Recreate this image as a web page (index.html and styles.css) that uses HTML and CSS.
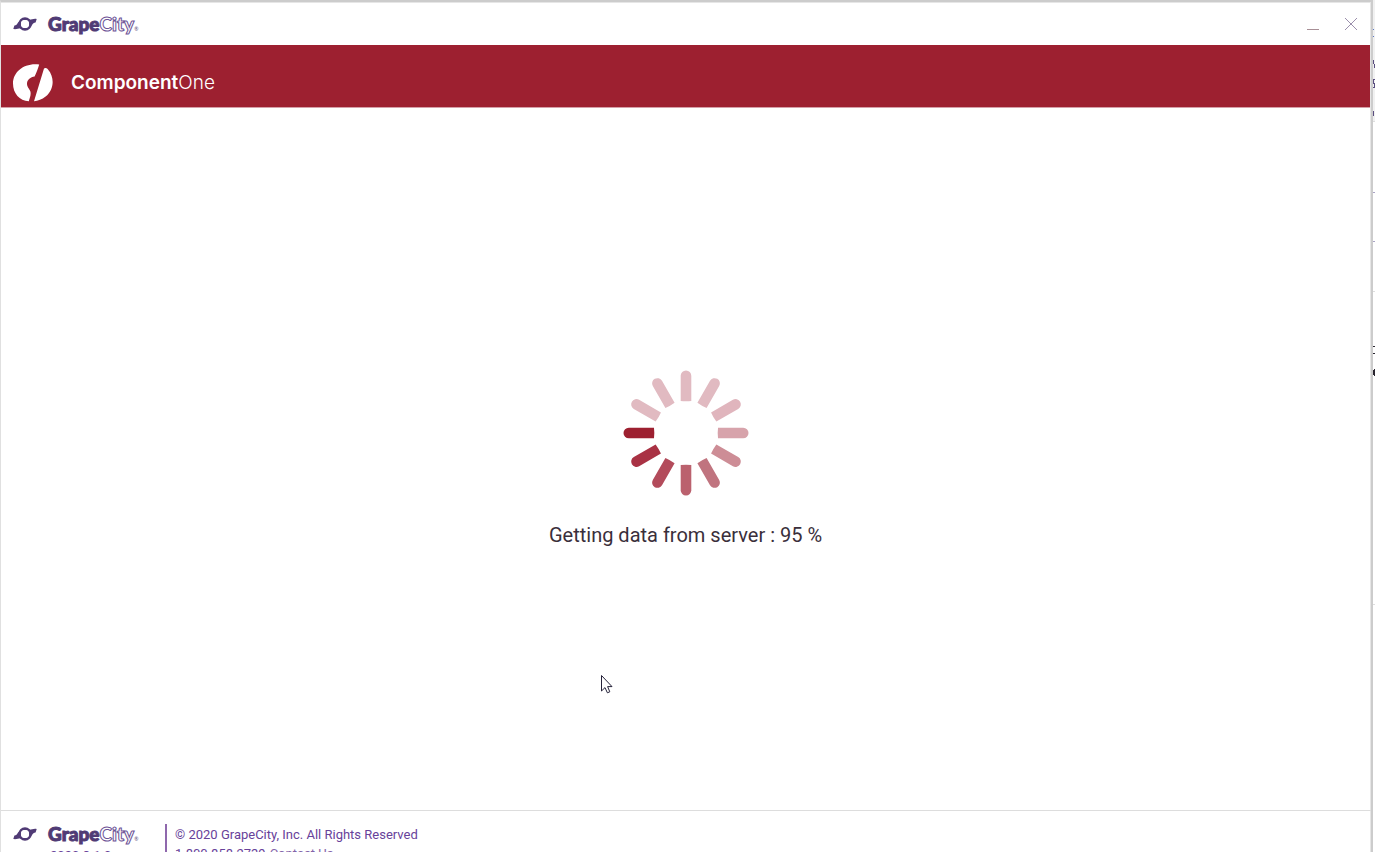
FILE: index.html
```html
<!DOCTYPE html>
<html lang="en">
<head>
    <meta charset="UTF-8">
    <meta name="viewport" content="width=device-width, initial-scale=1.0">
    <title>ComponentOne</title>
    <link rel="stylesheet" href="styles.css">
</head>
<body>
    <div class="window">
        <header class="titlebar">
            <div class="brand">
                <svg class="brand-mark" viewBox="0 0 24 14" aria-hidden="true">
                    <circle cx="12" cy="7" r="5.4"/>
                    <path class="brand-fill" d="M0.3 12L1.4 8.4C4 8.6 4.6 5.6 6.4 4L8.8 11.6C6.4 10.2 4.4 12.8 0.3 12ZM23.7 2L22.6 5.6C20 5.4 19.4 8.4 17.6 10L15.2 2.4C17.6 3.8 19.6 1.2 23.7 2Z"/>
                    <circle class="brand-hole" cx="12" cy="7" r="4"/>
                </svg>
                <span class="brand-name">Grape<span class="outlined">City</span><span class="reg">®</span></span>
            </div>
            <div class="window-controls">
                <button type="button" aria-label="Minimize">
                    <svg viewBox="0 0 14 14"><path class="minimize" d="M1 12.5H13"/></svg>
                </button>
                <button type="button" aria-label="Close">
                    <svg viewBox="0 0 14 14"><path d="M1 1L13 13M13 1L1 13"/></svg>
                </button>
            </div>
        </header>

        <div class="product-bar">
            <svg class="product-mark" viewBox="0 0 40 38" aria-hidden="true">
                <path d="M26.2 0.5C11 -1.4 0 8 0 19.5C0 29.5 6.5 36.6 15.8 37.3C16.8 34 18.2 30.8 17.4 27.6C16.6 24.8 13.8 23.2 14 19.4C14.2 15.4 17.6 13 21.6 12.4C23.6 8.6 25 4.6 26.2 0.5Z"/>
                <path d="M31 4.5C32.4 3.4 33.8 4 35 5.4C42 13.6 41 25.8 32.6 32.6C29 35.6 25 37 21 37.2Z"/>
            </svg>
            <span class="product-name"><b>Component</b>One</span>
        </div>

        <main class="loading">
            <svg class="spinner" viewBox="-63 -63 126 126" aria-hidden="true">
                <defs>
                    <path id="bar" d="M-5.3 -32V-57.2A5.3 5.3 0 0 1 5.3 -57.2V-32Q0 -31.4 -5.3 -32Z"/>
                </defs>
                <use href="#bar" fill="#e1bac1"/>
                <use href="#bar" fill="#e1bac1" transform="rotate(30)"/>
                <use href="#bar" fill="#e0b5bd" transform="rotate(60)"/>
                <use href="#bar" fill="#d7a3ab" transform="rotate(90)"/>
                <use href="#bar" fill="#cd8d96" transform="rotate(120)"/>
                <use href="#bar" fill="#c0747f" transform="rotate(150)"/>
                <use href="#bar" fill="#bb616e" transform="rotate(180)"/>
                <use href="#bar" fill="#b34b5b" transform="rotate(210)"/>
                <use href="#bar" fill="#a93244" transform="rotate(240)"/>
                <use href="#bar" fill="#9d2030" transform="rotate(270)"/>
                <use href="#bar" fill="#e1bac1" transform="rotate(300)"/>
                <use href="#bar" fill="#e1bac1" transform="rotate(330)"/>
            </svg>
            <p class="status" role="status">Getting data from server : 95 %</p>
        </main>

        <footer class="footer">
            <div class="footer-brand">
                <div class="brand">
                    <svg class="brand-mark" viewBox="0 0 24 14" aria-hidden="true">
                        <circle cx="12" cy="7" r="5.4"/>
                        <path class="brand-fill" d="M0.3 12L1.4 8.4C4 8.6 4.6 5.6 6.4 4L8.8 11.6C6.4 10.2 4.4 12.8 0.3 12ZM23.7 2L22.6 5.6C20 5.4 19.4 8.4 17.6 10L15.2 2.4C17.6 3.8 19.6 1.2 23.7 2Z"/>
                        <circle class="brand-hole" cx="12" cy="7" r="4"/>
                    </svg>
                    <span class="brand-name">Grape<span class="outlined">City</span><span class="reg">®</span></span>
                </div>
                <span class="version">2020.3.1.0</span>
            </div>
            <div class="footer-info">
                <div>© 2020 GrapeCity, Inc. All Rights Reserved</div>
                <div class="contact"><span>1.800.858.2739</span><a href="#">Contact Us</a></div>
            </div>
        </footer>
    </div>

    <!-- sliver of the page behind the window -->
    <svg class="behind" width="2" height="852" aria-hidden="true">
        <path fill="#f1f1f1" d="M0 0H2V121H0Z"/>
        <path fill="#dedede" d="M0 121H2V122H0ZM0 291H2V292H0ZM0 604H2V605H0Z"/>
        <path fill="#5b78c8" d="M0 29H1V30H0ZM0 36H1V37H0Z"/>
        <path fill="#5a4e80" d="M0 60H1V64H2V68H1V64H0ZM0 79H2V80H1V83H2V88H0V87H1V84H0ZM0 111H1V116H0Z"/>
        <path fill="#a9a3c4" d="M0 192H2V193H0ZM0 241H2V242H0Z"/>
        <path fill="#29252f" d="M0 346H2V347H0ZM0 353H2V354H0ZM0 370H1V369H2V376H1V375H0Z"/>
    </svg>

    <svg class="cursor" viewBox="0 0 13 20" aria-hidden="true">
        <path d="M1.5 1.5V17L5 13.6L7.4 18.8L9.8 17.8L7.6 12.6H12Z"/>
    </svg>
</body>
</html>
```

FILE: styles.css
```css
* {
    box-sizing: border-box;
}

body {
    margin: 0;
    height: 100vh;
    display: flex;
    overflow: hidden;
    background: #fff;
    font-family: Roboto, sans-serif;
}

.window {
    flex: 1;
    min-width: 0;
    display: flex;
    flex-direction: column;
    border-top: 2px solid #ccc;
    border-right: 2px solid #ccc;
    border-left: 1px solid #e0e0e0;
    box-shadow: inset -1px 1px #e6e6e6;
}

.behind {
    flex: none;
}

.titlebar {
    flex: none;
    height: 43px;
    padding: 0 13px 0 12px;
    display: flex;
    align-items: center;
    justify-content: space-between;
}

.brand {
    display: flex;
    align-items: center;
    gap: 11px;
    color: #503b75;
}

.brand-mark {
    width: 24px;
    height: 14px;
    fill: none;
}

.brand-mark circle {
    stroke: #503b75;
    stroke-width: 2.6;
}

.brand-mark .brand-fill {
    fill: #503b75;
}

.brand-mark .brand-hole {
    fill: #fff;
    stroke: none;
}

.brand-name {
    font-family: Lato, sans-serif;
    font-size: 19px;
    font-weight: 900;
    line-height: 20px;
    -webkit-text-stroke: 1px #503b75;
}

.outlined {
    color: #fff;
    -webkit-text-stroke: 1px #6c5296;
}

.reg {
    font-size: 5px;
    font-weight: 400;
    line-height: 1;
    -webkit-text-stroke: 0;
}

.window-controls {
    display: flex;
    gap: 24px;
}

.window-controls button {
    width: 14px;
    height: 14px;
    padding: 0;
    border: none;
    background: none;
    cursor: pointer;
}

.window-controls svg {
    display: block;
    stroke: #9b8fac;
    stroke-width: 1;
}

.window-controls .minimize {
    stroke: #a88f96;
}

.product-bar {
    flex: none;
    height: 63px;
    margin-right: 1px;
    padding: 13px 12px 0;
    display: flex;
    align-items: center;
    gap: 18px;
    background: #9d2030;
    border-bottom: 1px solid #d5a0a8;
    color: #fff;
}

.product-mark {
    width: 40px;
    height: 38px;
    fill: #fff;
}

.product-name {
    font-family: Inter, sans-serif;
    font-size: 19px;
    font-weight: 300;
    line-height: 22px;
}

.product-name b {
    font-weight: 600;
}

.loading {
    flex: 1;
    padding: 0 1px 2px 0;
    display: flex;
    flex-direction: column;
    align-items: center;
    justify-content: center;
    gap: 27px;
}

.spinner {
    width: 126px;
    height: 126px;
}

.status {
    margin: 0;
    font-size: 20px;
    line-height: 24px;
    color: #3a2f3b;
}

/* the footer runs past the bottom of the window */
.footer {
    flex: none;
    height: 42px;
    padding: 13px 12px 0;
    display: flex;
    align-items: flex-start;
    overflow: hidden;
    border-top: 1px solid #ddd;
    color: #68429a;
    font-size: 13px;
    line-height: 19px;
}

.footer-brand {
    width: 152px;
    display: flex;
    flex-direction: column;
    gap: 2px;
}

.version {
    margin-left: 37px;
}

.footer-info {
    padding: 1px 0 20px 8px;
    border-left: 2px solid #8f68ad;
}

.contact {
    display: flex;
    gap: 4px;
}

.contact a {
    color: #8465aa;
    text-decoration: none;
}

.cursor {
    position: absolute;
    left: 600px;
    top: 674px;
    width: 13px;
    height: 20px;
    fill: #fff;
    stroke: #25223a;
    stroke-width: 1;
}
```
